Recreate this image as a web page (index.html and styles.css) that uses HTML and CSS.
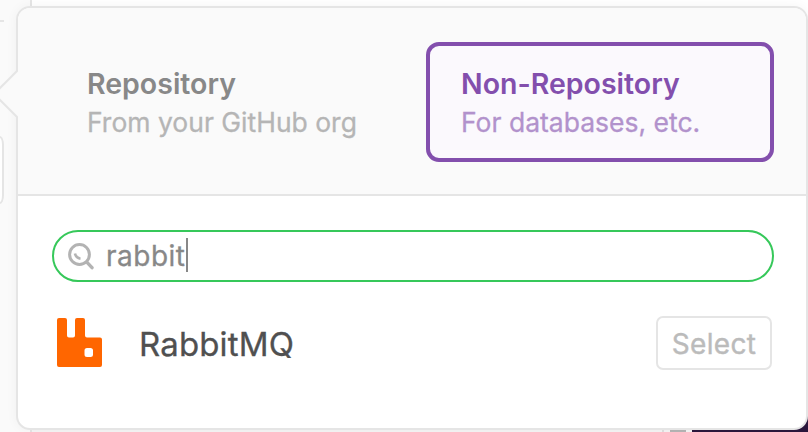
FILE: index.html
```html
<!DOCTYPE html>
<html lang="en">
<head>
<meta charset="utf-8">
<title>Add service</title>
<link rel="stylesheet" href="styles.css">
</head>
<body>
<div class="backdrop">
  <div class="rail"><div class="rail-rule"></div><div class="rail-button"></div></div>
  <div class="page-strip"><span class="strip-pane"></span><span class="strip-chip"></span><span class="strip-dark"></span></div>
</div>
<main class="popover">
  <svg class="pointer" width="18" height="48" viewBox="0 0 18 48"><path d="M18 0V48H17L-8 23V25L17 1Z" fill="#fafafa"/><path d="M17 0V1L-6 24L17 47V48" fill="none" stroke="#e5e5e5" stroke-width="2"/></svg>
  <header class="tabs">
    <button class="tab"><span class="tab-title">Repository</span><span class="tab-note">From your GitHub org</span></button>
    <button class="tab active"><span class="tab-title">Non-Repository</span><span class="tab-note">For databases, etc.</span></button>
  </header>
  <section class="content">
    <div class="search">
      <svg class="search-icon" width="26" height="27" viewBox="0 0 26 27" fill="none" stroke="#b3b3b3"><circle cx="11.5" cy="11.5" r="9.9" stroke-width="3"/><path d="M18.8 19.2L24 24.7" stroke-width="3.4" stroke-linecap="round"/><path d="M7 10.5Q7.8 15 12.5 15.7" stroke-width="2.6"/></svg>
      <span class="query">rabbit</span><span class="caret"></span>
    </div>
    <div class="result">
      <svg class="logo" width="46" height="50" viewBox="0 0 46 50"><path fill="#f60" fill-rule="evenodd" d="M2 0H8Q10 0 10 2V17.5Q10 19.5 12 19.5H16Q18 19.5 18 17.5V2Q18 0 20 0H26Q28 0 28 2V17.5Q28 19.5 30 19.5H43Q45 19.5 45 21.5V47Q45 49 43 49H2Q0 49 0 47V2Q0 0 2 0ZM30 30Q27.5 30 27.5 32.5V36.5Q27.5 39 30 39H33.5Q36 39 36 36.5V32.5Q36 30 33.5 30Z"/></svg>
      <span class="name">RabbitMQ</span>
      <button class="select"><span>Select</span></button>
    </div>
  </section>
</main>
</body>
</html>
```
FILE: styles.css
```css
* { box-sizing: border-box; }
body {
  margin: 0;
  width: 808px;
  height: 432px;
  overflow: hidden;
  position: relative;
  background: #fff;
  font-family: Inter, "Liberation Sans", sans-serif;
}
button { font: inherit; margin: 0; text-align: left; }
.backdrop {
  position: absolute;
  inset: 0;
  display: flex;
}
.rail {
  width: 32px;
  background: #fafafa;
  border-right: 2px solid #e5e5e5;
  padding-top: 20px;
}
.rail-rule { width: 4px; height: 2px; background: #e5e5e5; }
.rail-button {
  width: 4px;
  height: 68px;
  margin-top: 114px;
  background: #fff;
  border: solid #e5e5e5;
  border-width: 2px 2px 2px 0;
  border-radius: 0 4px 4px 0 / 0 9px 9px 0;
}
.page-strip {
  flex: 1;
  height: 32px;
  align-self: flex-end;
  display: flex;
  background: #f5f5f5;
}
.strip-pane { width: 632px; border-right: 2px solid #e0e0e0; }
.strip-chip { width: 16px; margin: 0 6px; background: #b5b5b5; }
.strip-dark { flex: 1; background: #2b173d; }
.popover {
  position: relative;
  width: 792px;
  height: 424px;
  margin: 6px 0 0 16px;
  background: #fff;
  border: 2px solid #e5e5e5;
  border-radius: 14px;
  box-shadow: 0 0 12px rgba(0, 0, 0, .045);
}
.pointer { position: absolute; left: -18px; top: 62px; }
.tabs {
  height: 188px;
  padding: 34px 32px 32px 34px;
  display: flex;
  gap: 26px;
  background: #fafafa;
  border-bottom: 2px solid #e5e5e5;
  border-radius: 12px 12px 0 0;
}
.tab {
  width: 348px;
  height: 120px;
  padding: 19px 0 0 31px;
  display: flex;
  flex-direction: column;
  border: 4px solid transparent;
  border-radius: 13px;
  background: none;
  color: #888;
  white-space: nowrap;
}
.tab-title { font-size: 28.5px; line-height: 38px; font-weight: 600; }
.tab-note { font-size: 26.5px; line-height: 38px; color: #b5b5b5; -webkit-text-stroke: .3px; }
.active { color: #834fad; background: #fbf9fd; border-color: #834fad; }
.active .tab-note { color: #b292cc; }
.content { padding: 34px 32px 0 34px; }
.search {
  width: 722px;
  height: 52px;
  padding-left: 14px;
  display: flex;
  align-items: center;
  border: 2px solid #36c85a;
  border-radius: 26px;
}
.query {
  margin-left: 12px;
  font-size: 28px;
  line-height: 40px;
  letter-spacing: .5px;
  color: #888;
  -webkit-text-stroke: .3px;
}
.caret { width: 2px; height: 34px; background: #888; margin-bottom: 3px; }
.result {
  height: 54px;
  margin-top: 34px;
  padding: 0 2px 0 5px;
  display: flex;
  align-items: center;
}
.name {
  margin: 2px 0 0 36px;
  font-size: 33px;
  line-height: 44px;
  letter-spacing: .15px;
  color: #505050;
  -webkit-text-stroke: .3px;
}
.select {
  width: 116px;
  height: 54px;
  margin-left: auto;
  padding: 2px 0 0;
  display: flex;
  align-items: center;
  justify-content: center;
  border: 2px solid #e5e5e5;
  border-radius: 7px;
  background: #fff;
  color: #bbb;
  font-size: 28px;
  letter-spacing: .3px;
  -webkit-text-stroke: .4px;
}
```
